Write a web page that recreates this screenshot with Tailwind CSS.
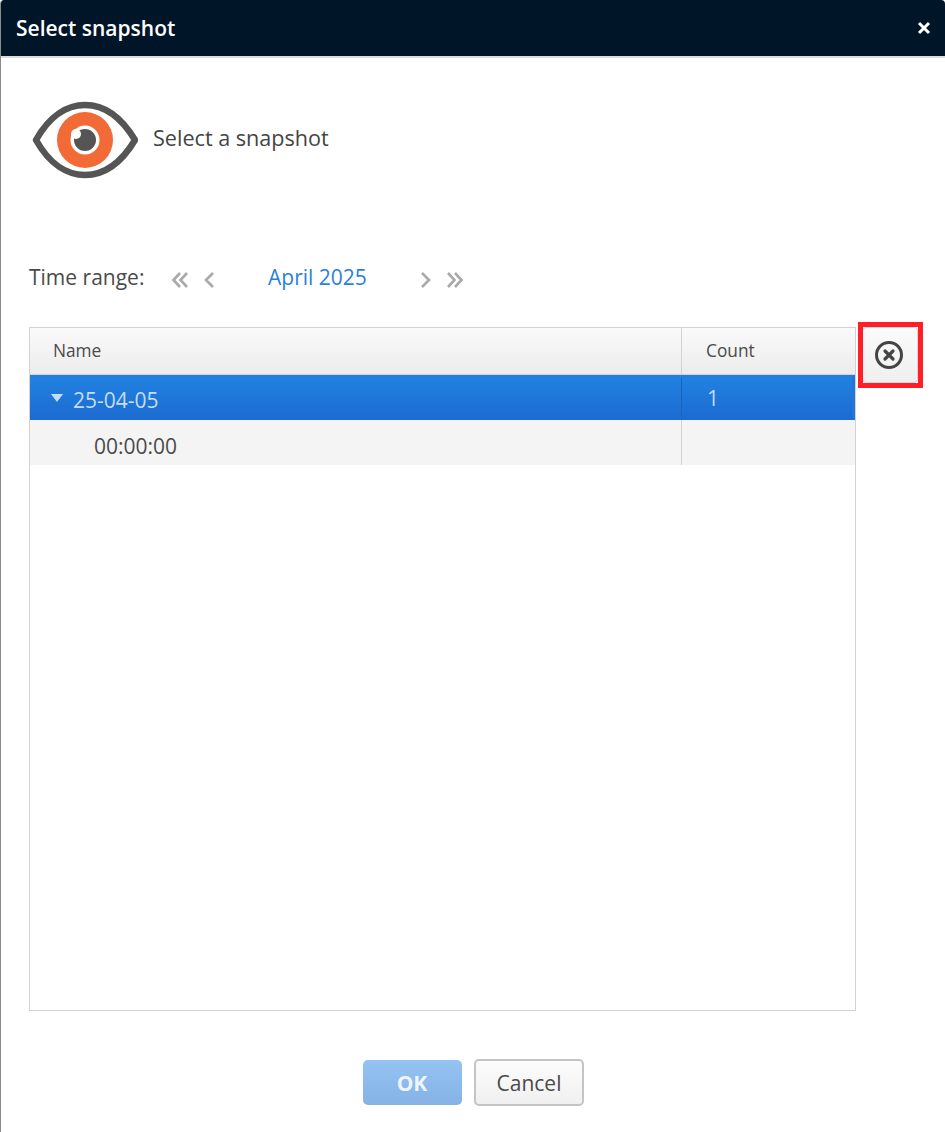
<!DOCTYPE html>
<html lang="en">
<head>
  <meta charset="UTF-8" />
  <title>Select snapshot</title>
  <script src="https://cdn.jsdelivr.net/npm/@tailwindcss/browser@4"></script>
</head>
<body class="bg-white">
  <div class="w-[945px] h-[1132px] flex flex-col bg-white border-l border-[#8a8a8a] rounded-t-[4px] font-['Open_Sans',sans-serif] text-[#4a4a4a] overflow-hidden">
    <!-- Title bar -->
    <div class="h-[58px] shrink-0 flex items-center justify-between bg-[#001528] border-b-2 border-[#dcdcdc] pl-[15px] pr-[14px]">
      <span class="pt-[2px] text-[21px] font-semibold text-white">Select snapshot</span>
      <svg class="w-[14px] h-[14px] mb-[1px]" viewBox="0 0 14 14"><path d="M2 2 L12 12 M12 2 L2 12" stroke="#fff" stroke-width="3" /></svg>
    </div>

    <!-- Eye + subtitle -->
    <div class="flex items-center pl-[31px] pt-[43px] h-[121px] shrink-0">
      <svg class="w-[106px] h-[78px]" viewBox="0 0 106 78">
        <path d="M4 39 C18 14 36 4 53 4 C70 4 88 14 103 39 C88 64 70 74 53 74 C36 74 18 64 4 39 Z" fill="#fff" stroke="#555" stroke-width="6.5" stroke-linejoin="round" />
        <circle cx="53" cy="39" r="28" fill="#f26b36" />
        <circle cx="53" cy="39" r="14.5" fill="#fff" />
        <circle cx="53" cy="39" r="11" fill="#555" />
        <circle cx="44" cy="33" r="5" fill="#fff" />
      </svg>
      <span class="ml-[15px] mb-[4px] text-[21.6px] font-medium text-[#444444]">Select a snapshot</span>
    </div>

    <!-- Time range -->
    <div class="flex items-center pl-[28px] mt-[81px] h-[36px] shrink-0 text-[21px]">
      <span class="w-[142px]">Time range:</span>
      <svg class="w-[18px] h-[18px] mt-[3px]" viewBox="0 0 18 18" fill="none" stroke="#a9a9a9" stroke-width="2.6"><path d="M9 2 L2.5 9 L9 16 M16 2 L9.5 9 L16 16" /></svg>
      <svg class="ml-[14px] w-[12px] h-[18px] mt-[3px]" viewBox="0 0 12 18" fill="none" stroke="#a9a9a9" stroke-width="2.6"><path d="M10 2 L3 9 L10 16" /></svg>
      <span class="ml-[53px] w-[100px] text-[#2a7fdc]">April 2025</span>
      <svg class="ml-[52px] w-[12px] h-[18px] mt-[3px]" viewBox="0 0 12 18" fill="none" stroke="#a9a9a9" stroke-width="2.6"><path d="M2 2 L9 9 L2 16" /></svg>
      <svg class="ml-[14px] w-[18px] h-[18px] mt-[3px]" viewBox="0 0 18 18" fill="none" stroke="#a9a9a9" stroke-width="2.6"><path d="M2 2 L8.5 9 L2 16 M9 2 L15.5 9 L9 16" /></svg>
    </div>

    <!-- Table + delete button -->
    <div class="flex items-start pl-[28px] mt-[31px] shrink-0">
      <div class="w-[827px] h-[684px] border border-[#d2d2d2] bg-white">
        <div class="flex h-[47px] bg-gradient-to-b from-[#fafafa] to-[#ececec] border-b border-[#d2d2d2] text-[17.3px]">
          <div class="w-[652px] pl-[23px] flex items-center border-r border-[#d2d2d2]">Name</div>
          <div class="flex-1 pl-[24px] flex items-center">Count</div>
        </div>
        <div class="flex h-[45px] bg-gradient-to-b from-[#2281e0] to-[#1c6cd2] border-t-[3px] border-b-[3px] border-r-[3px] border-t-[#217fdf] border-b-[#1c6dd3] border-r-[#2076da] text-[21px] text-[#c4dcf4]">
          <div class="w-[652px] pl-[20px] pt-[7px] flex items-center border-r border-[#1b62bd]">
            <svg class="w-[14px] h-[8px] mb-[7px]" viewBox="0 0 14 8"><path d="M1 0 H13 L7 8 Z" fill="#c4dcf4" /></svg>
            <span class="ml-[9px]">25-04-05</span>
          </div>
          <div class="flex-1 pl-[25px] pt-[3px] flex items-center">1</div>
        </div>
        <div class="flex h-[45px] bg-[#f4f4f4] text-[21px]">
          <div class="w-[652px] pl-[64px] pt-[9px] flex items-center border-r border-[#d2d2d2]">00:00:00</div>
          <div class="flex-1"></div>
        </div>
      </div>
      <div class="relative ml-[6px] w-[56px] h-[56px] rounded-[4px] border border-[#d8d8d8] bg-gradient-to-b from-[#fbfbfb] to-[#efefef] flex items-center justify-center pr-[2px]">
        <svg class="w-[28px] h-[28px]" viewBox="0 0 28 28" fill="none" stroke="#444" stroke-linecap="round">
          <circle cx="14" cy="14" r="12.5" stroke-width="3" />
          <path d="M10 10 L18 18 M18 10 L10 18" stroke-width="3.2" />
        </svg>
        <div class="absolute -left-[5px] -top-[6px] w-[65px] h-[66px] border-[5px] border-[#ff1f26]"></div>
      </div>
    </div>

    <!-- Footer buttons -->
    <div class="flex justify-center items-center gap-[12px] mt-[48px]">
      <button class="w-[99px] h-[45px] pt-[2px] rounded-[5px] bg-gradient-to-b from-[#94c3f3] to-[#86b2e6] text-[21px] font-bold text-[#eef5fd]">OK</button>
      <button class="w-[110px] h-[47px] pt-[2px] pl-[1px] rounded-[5px] border-2 border-[#c4c4c4] bg-gradient-to-b from-[#fcfcfc] to-[#f0f0f0] text-[21px] text-[#4a4a4a]">Cancel</button>
    </div>
  </div>
</body>
</html>
